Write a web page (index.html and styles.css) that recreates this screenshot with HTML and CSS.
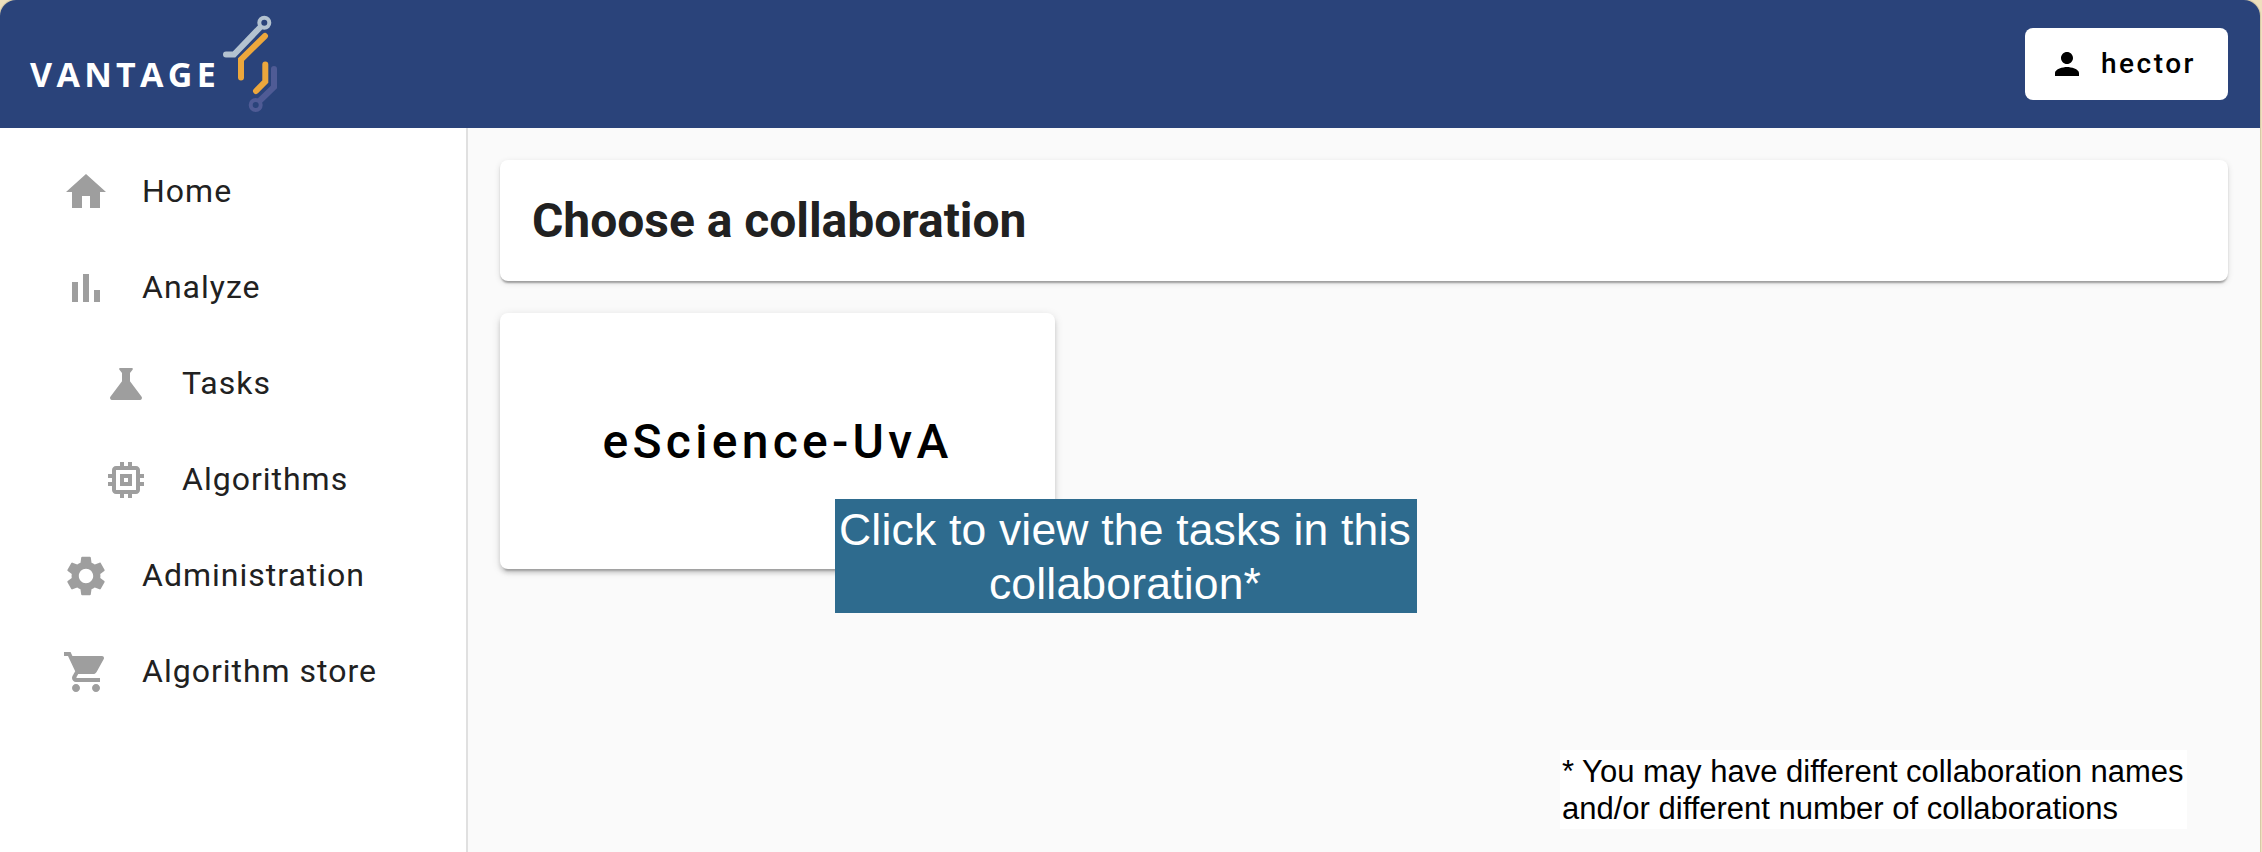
FILE: index.html
```html
<!DOCTYPE html>
<html lang="en">
<head>
<meta charset="utf-8">
<title>Vantage</title>
<link rel="stylesheet" href="styles.css">
</head>
<body>
<div class="window">
  <header class="header">
    <div class="logo">
      <span class="logo-text">VANTAGE</span>
      <svg class="logo-mark" width="60" height="100" viewBox="220 14 60 100" fill="none" stroke-linecap="round" stroke-linejoin="miter">
        <g stroke="#b3c2d0" stroke-width="6"><path d="M226 54.500H234L259.500 28"/><circle cx="264.300" cy="22.800" r="5" stroke-width="4"/></g>
        <path stroke="#eca73c" stroke-width="6" d="M265 36L241 59.500V77.500"/>
        <g stroke="#4f5b95" stroke-width="6"><path d="M274 69V87L260.500 100"/><circle cx="255.700" cy="105" r="5" stroke-width="4"/></g>
        <path stroke="#eca73c" stroke-width="6" d="M265.300 64.500V81.500L256 91"/>
      </svg>
    </div>
    <button class="user">
      <svg class="user-icon" viewBox="0 0 24 24"><path d="M12 12c2.210 0 4-1.790 4-4s-1.790-4-4-4-4 1.790-4 4 1.790 4 4 4zm0 2c-2.670 0-8 1.340-8 4v2h16v-2c0-2.660-5.330-4-8-4z"/></svg>
      <span>hector</span>
    </button>
  </header>
  <div class="body">
    <nav class="sidebar">
      <a class="item"><svg class="icon" viewBox="0 0 24 24"><path d="M10 20v-6h4v6h5v-8h3L12 3 2 12h3v8z"/></svg><span class="label">Home</span></a>
      <a class="item"><svg class="icon" viewBox="0 0 24 24"><path d="M5 9h3v10H5zM10.500 5h3v14h-3zM16 13h3v6h-3z"/></svg><span class="label">Analyze</span></a>
      <a class="item sub"><svg class="icon" viewBox="0 0 24 24"><path d="M19.800 18.400L14 10.670V6.500l1.350-1.690c.26-.33.030-.81-.39-.81H9.040c-.42 0-.65.480-.39.810L10 6.500v4.170L4.200 18.400c-.49.660-.020 1.600.800 1.600h14c.820 0 1.290-.940.800-1.600z"/></svg><span class="label">Tasks</span></a>
      <a class="item sub"><svg class="icon" viewBox="0 0 24 24"><path d="M15 9H9v6h6V9zm-2 4h-2v-2h2v2zm8-2V9h-2V7c0-1.100-.9-2-2-2h-2V3h-2v2h-2V3H9v2H7c-1.100 0-2 .9-2 2v2H3v2h2v2H3v2h2v2c0 1.100.9 2 2 2h2v2h2v-2h2v2h2v-2h2c1.100 0 2-.9 2-2v-2h2v-2h-2v-2h2zm-4 6H7V7h10v10z"/></svg><span class="label">Algorithms</span></a>
      <a class="item"><svg class="icon" viewBox="0 0 24 24"><path d="M19.140 12.940c.040-.3.060-.61.060-.94 0-.32-.020-.64-.070-.94l2.030-1.580c.180-.14.230-.41.120-.61l-1.920-3.320c-.12-.22-.37-.29-.59-.22l-2.390.96c-.5-.38-1.030-.7-1.620-.94l-.36-2.540c-.040-.24-.24-.41-.48-.41h-3.840c-.24 0-.43.170-.47.410l-.36 2.540c-.59.240-1.130.570-1.620.940l-2.390-.96c-.22-.080-.47 0-.59.220L2.740 8.870c-.12.210-.080.470.120.610l2.030 1.580c-.050.300-.090.630-.090.940s.020.640.070.940l-2.030 1.580c-.18.140-.23.410-.12.610l1.920 3.320c.120.220.370.290.590.220l2.390-.96c.5.380 1.030.7 1.620.94l.36 2.540c.050.240.240.410.480.410h3.840c.24 0 .44-.17.470-.41l.36-2.540c.59-.24 1.130-.56 1.620-.94l2.390.96c.22.080.47 0 .59-.22l1.920-3.320c.12-.22.070-.47-.12-.61l-2.010-1.580zM12 15.600c-1.980 0-3.600-1.620-3.600-3.600s1.620-3.600 3.600-3.600 3.600 1.620 3.600 3.600-1.620 3.600-3.600 3.600z"/></svg><span class="label">Administration</span></a>
      <a class="item"><svg class="icon" viewBox="0 0 24 24"><path d="M7 18c-1.100 0-1.990.9-1.990 2S5.900 22 7 22s2-.9 2-2-.9-2-2-2zM1 2v2h2l3.600 7.590-1.350 2.450c-.16.280-.25.610-.25.960 0 1.100.9 2 2 2h12v-2H7.420c-.14 0-.25-.11-.25-.25l.030-.12.900-1.630h7.450c.750 0 1.410-.41 1.750-1.030l3.580-6.490c.080-.14.120-.31.120-.48 0-.55-.45-1-1-1H5.210l-.94-2H1zm16 16c-1.100 0-1.990.9-1.990 2s.89 2 1.990 2 2-.9 2-2-.9-2-2-2z"/></svg><span class="label">Algorithm store</span></a>
    </nav>
    <main class="content">
      <section class="card title-card"><h1 class="title">Choose a collaboration</h1></section>
      <section class="card collab"><span class="collab-name">eScience-UvA</span></section>
      <div class="callout"><span>Click to view the tasks in this</span><br>collaboration*</div>
      <div class="note">* You may have different collaboration names<br>and/or different number of collaborations</div>
    </main>
  </div>
</div>
</body>
</html>
```
FILE: styles.css
```css
* { box-sizing: border-box; }
body { margin: 0; background: #eee0bd; font-family: Roboto, sans-serif; }
.window { width: 2260px; height: 852px; display: flex; flex-direction: column; overflow: hidden; border-radius: 16px 16px 0 0; box-shadow: 0 0 0 1px #d6c9a8; }
.header { height: 128px; flex: none; display: flex; align-items: center; justify-content: space-between; padding: 0 32px 0 30px; background: #2a437a; }
.logo { display: flex; align-items: center; }
.logo-text { width: 190px; padding-top: 20px; font: 700 34px/40px "Open Sans", sans-serif; letter-spacing: 4.300px; color: #fff; white-space: nowrap; }
.logo-mark { flex: none; }
.user { display: flex; align-items: center; gap: 16px; width: 203px; height: 72px; padding: 0 0 0 24px; border: 0; border-radius: 8px; background: #fff; color: #000; font: 500 28px/36px Roboto, sans-serif; letter-spacing: 2.5px; }
.user-icon { width: 36px; height: 36px; }
.body { flex: 1; display: flex; min-height: 0; }
.sidebar { width: 468px; flex: none; padding-top: 16px; border-right: 2px solid #e0e0e0; background: #fff; }
.item { display: flex; align-items: center; gap: 32px; height: 96px; padding-left: 62px; font-size: 32px; line-height: 48px; letter-spacing: 1px; color: #212121; }
.sub { padding-left: 102px; }
.label { padding-bottom: 2px; }
.icon { width: 48px; height: 48px; flex: none; fill: #9e9e9e; }
.content { position: relative; flex: 1; display: flex; flex-direction: column; gap: 32px; padding: 32px; background: #fafafa; }
.card { border-radius: 8px; background: #fff; }
.title-card { height: 121px; padding: 29px 32px 28px; box-shadow: 0 4px 2px -2px rgba(0,0,0,.2), 0 2px 2px rgba(0,0,0,.14), 0 2px 6px rgba(0,0,0,.12); }
.title { margin: 0; font-size: 48px; line-height: 64px; font-weight: 700; letter-spacing: -.04px; color: #212121; white-space: nowrap; }
.collab { display: flex; align-items: center; justify-content: center; width: 555px; height: 256px; box-shadow: 0 6px 2px -4px rgba(0,0,0,.2), 0 4px 4px rgba(0,0,0,.14), 0 2px 10px rgba(0,0,0,.12); }
.collab-name { font-size: 48px; font-weight: 500; letter-spacing: 4.290px; color: #000; }
.callout { position: absolute; left: 367px; top: 371px; width: 582px; height: 114px; padding: 4px 2px 0 0; background: #2e6b8e; color: #fff; font: 44.500px/54px "Liberation Sans", sans-serif; letter-spacing: .18px; text-align: center; white-space: nowrap; }
.note { position: absolute; left: 1092px; top: 622px; width: 627px; height: 79px; padding: 3px 2px; background: #fff; color: #000; font: 31px/37px "Liberation Sans", sans-serif; white-space: nowrap; }
```
